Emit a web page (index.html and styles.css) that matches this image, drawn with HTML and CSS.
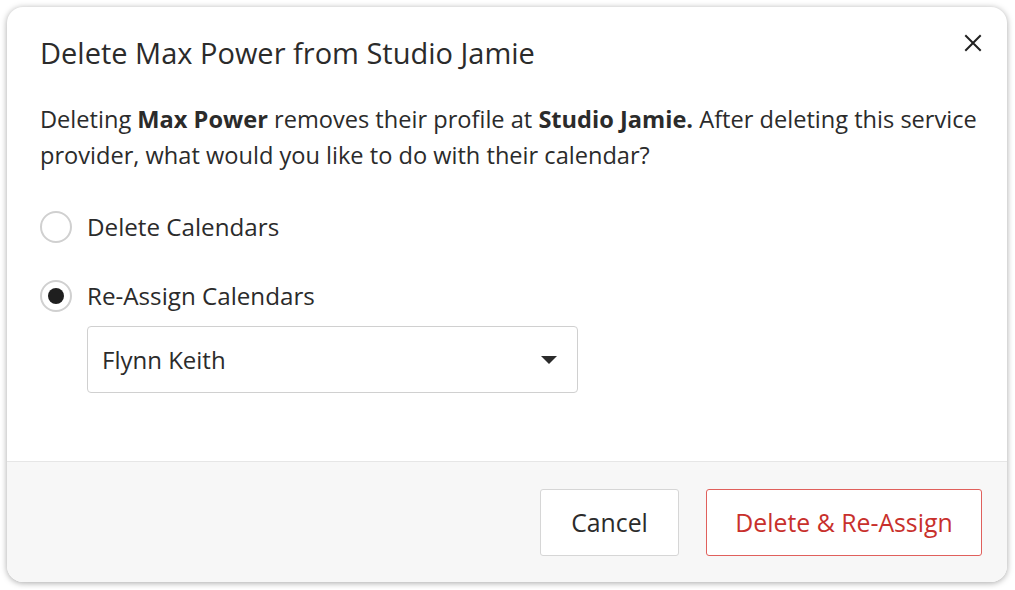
FILE: index.html
```html
<!doctype html>
<html lang="en">
<head>
  <meta charset="UTF-8">
  <title>Delete Service Provider</title>
  <link rel="stylesheet" href="styles.css">
</head>
<body>
  <div class="dialog">
    <div class="dialog-body">
      <div class="dialog-header">
        <h1>Delete Max Power from Studio Jamie</h1>
        <button class="close-btn" aria-label="Close">
          <svg width="18" height="18" viewBox="0 0 18 18"><path d="M2 2 L16 16 M16 2 L2 16" stroke="#222" stroke-width="2" stroke-linecap="square"/></svg>
        </button>
      </div>

      <p class="intro">Deleting <b>Max Power</b> removes their profile at <b>Studio Jamie.</b> After deleting this service provider, what would you like to do with their calendar?</p>

      <label class="radio-row">
        <span class="radio"></span>
        <span>Delete Calendars</span>
      </label>

      <label class="radio-row second">
        <span class="radio checked"></span>
        <span>Re-Assign Calendars</span>
      </label>

      <div class="select">
        <span>Flynn Keith</span>
        <svg width="16" height="10" viewBox="0 0 16 10"><path d="M0 1 L16 1 L8 9 Z" fill="#2b2b2b"/></svg>
      </div>
    </div>

    <div class="dialog-footer">
      <button class="btn">Cancel</button>
      <button class="btn danger">Delete &amp; Re-Assign</button>
    </div>
  </div>
</body>
</html>
```

FILE: styles.css
```css
body {
    margin: 0;
    padding: 7px;
    background: #ffffff;
    font-family: "Open Sans", Lato, sans-serif;
    color: #2b2b2b;
}

.dialog {
    width: 1000px;
    height: 575px;
    border-radius: 16px;
    background: #ffffff;
    box-shadow: 0 1px 6px rgba(0, 0, 0, 0.35);
    overflow: hidden;
    display: flex;
    flex-direction: column;
}

.dialog-body {
    height: 454px;
    box-sizing: border-box;
    padding: 31px 25px 0 33px;
}

.dialog-header {
    display: flex;
    justify-content: space-between;
    align-items: center;
}

h1 {
    font-size: 29px;
    font-weight: 400;
    line-height: 30px;
    margin: 0;
}

.close-btn {
    border: none;
    background: none;
    padding: 0;
    width: 18px;
    height: 18px;
    margin: -20px 0 0 0;
    cursor: pointer;
}

.intro {
    font-size: 23.6px;
    line-height: 36px;
    margin: 33px 0 0 0;
}

.intro b {
    font-weight: 700;
}

.radio-row {
    display: flex;
    align-items: center;
    gap: 15px;
    font-size: 24.2px;
    line-height: 30px;
    height: 32px;
    margin-top: 38px;
}

.radio-row.second {
    margin-top: 37px;
}

.radio {
    width: 32px;
    height: 32px;
    box-sizing: border-box;
    border: 2px solid #d0d0d0;
    border-radius: 50%;
    display: flex;
    align-items: center;
    justify-content: center;
}

.radio.checked::after {
    content: "";
    width: 16px;
    height: 16px;
    border-radius: 50%;
    background: #1f1f1f;
}

.select {
    margin: 14px 0 0 47px;
    width: 491px;
    height: 67px;
    box-sizing: border-box;
    border: 1px solid #d0d0d0;
    border-radius: 4px;
    display: flex;
    align-items: center;
    justify-content: space-between;
    padding: 0 20px 0 14px;
    font-size: 24px;
}

.dialog-footer {
    flex: 1;
    background: #f7f7f7;
    border-top: 1px solid #e6e6e6;
    display: flex;
    justify-content: flex-end;
    align-items: center;
    gap: 27px;
    padding-right: 25px;
}

.btn {
    height: 67px;
    font-family: inherit;
    font-size: 24.8px;
    background: #ffffff;
    border: 1px solid #d6d6d6;
    border-radius: 3px;
    color: #2b2b2b;
    width: 139px;
    padding: 0;
    cursor: pointer;
}

.btn.danger {
    width: 276px;
    color: #c8302c;
    border-color: #e0605c;
}
```
